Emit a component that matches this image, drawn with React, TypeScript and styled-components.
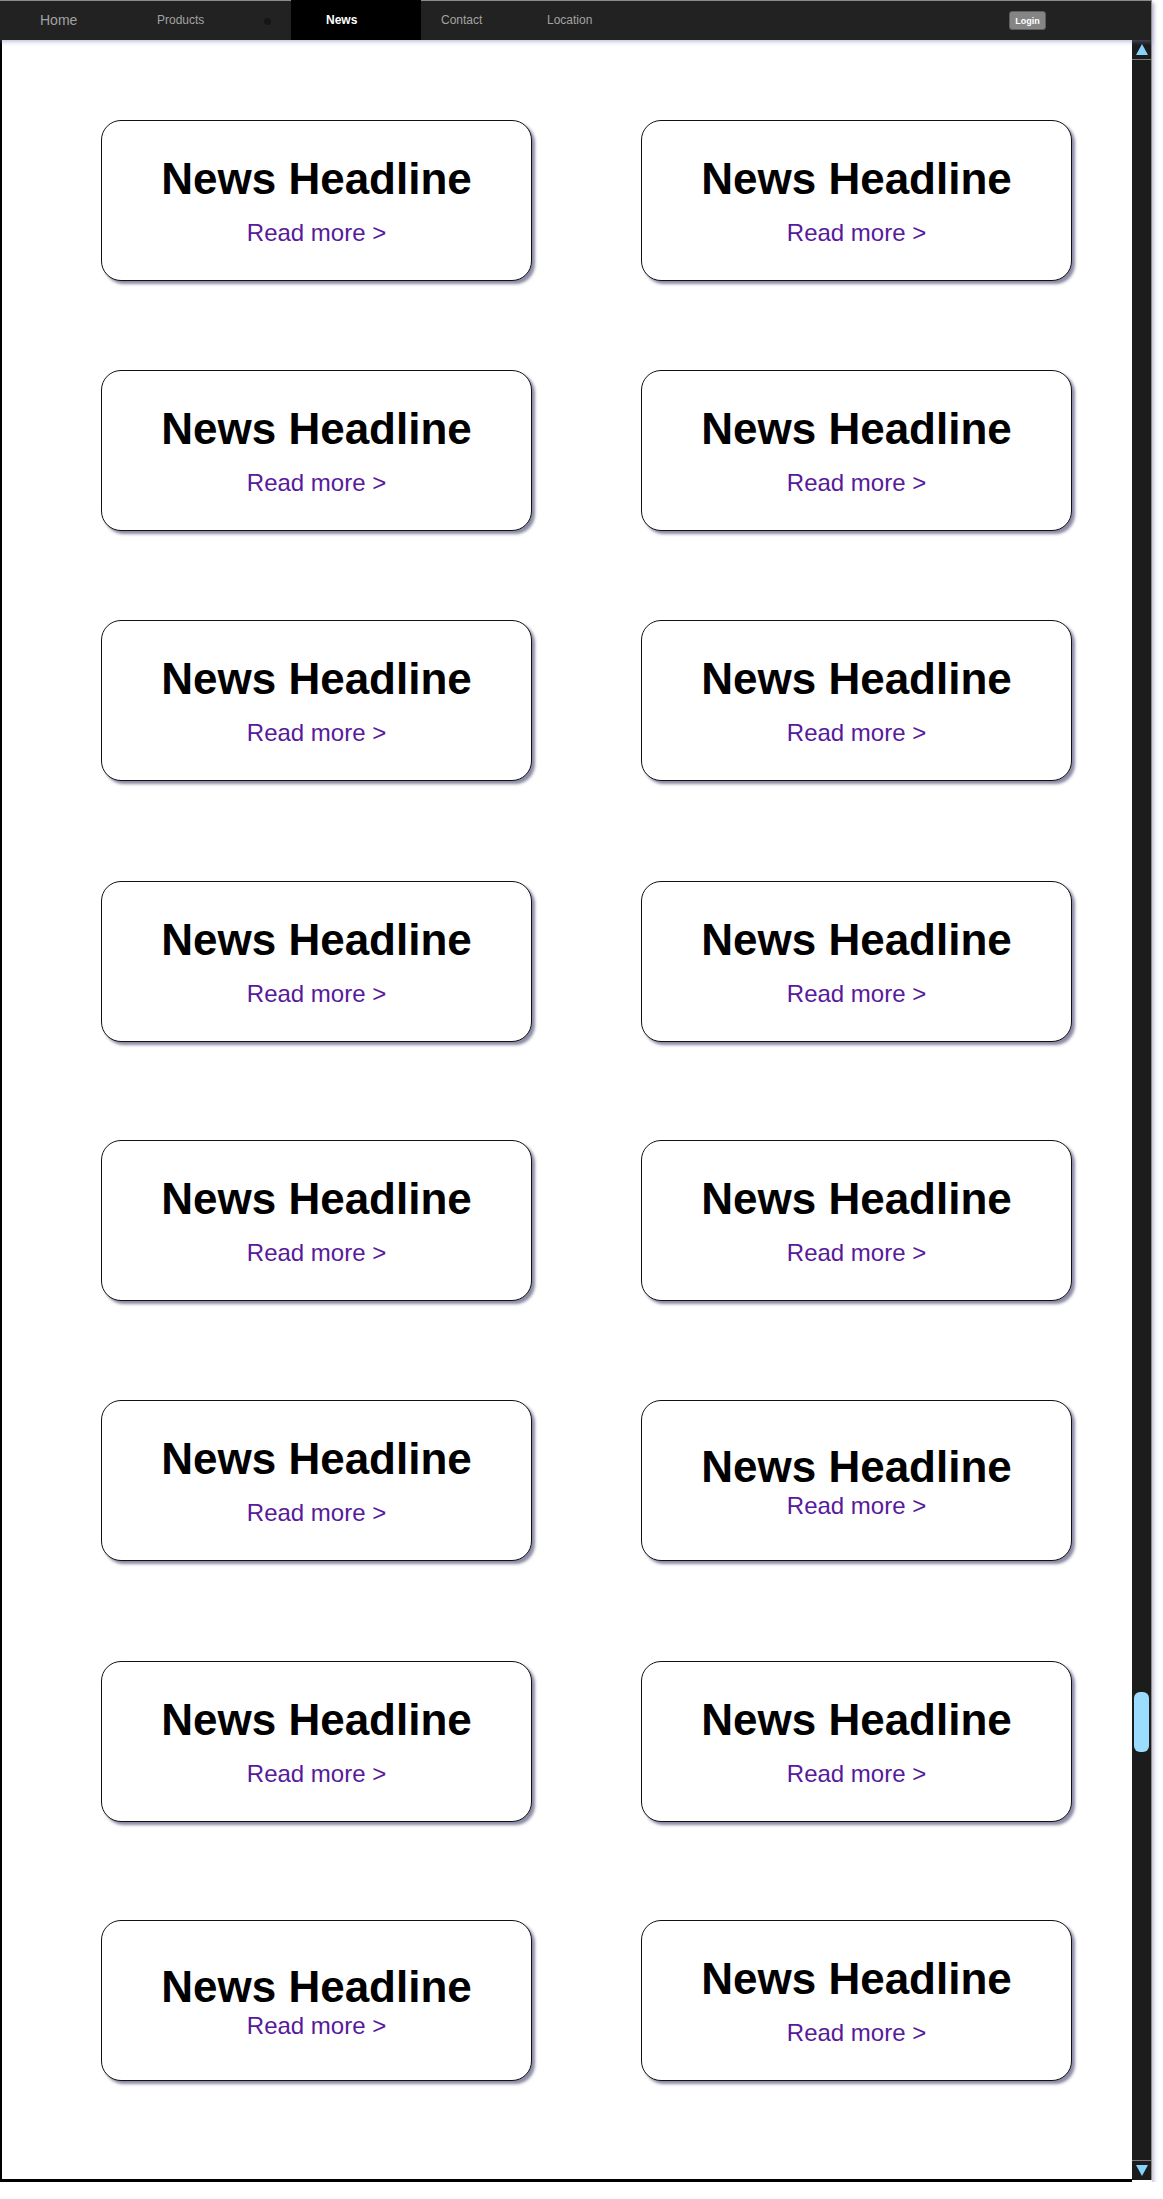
import * as React from 'react'
import styled, { createGlobalStyle } from 'styled-components'

const GlobalStyle = createGlobalStyle`
  html, body {
    margin: 0;
    padding: 0;
    background: #fff;
    font-family: "Liberation Sans", Arial, sans-serif;
  }
`

interface INavItem {
  label: string
  width: number
  pad: number
  active?: boolean
  big?: boolean
  dropdown?: boolean
}

const navItems: INavItem[] = [
  { label: 'Home', width: 122, pad: 40, big: true },
  { label: 'Products', width: 169, pad: 35, dropdown: true },
  { label: 'News', width: 130, pad: 35, active: true },
  { label: 'Contact', width: 106, pad: 20 },
  { label: 'Location', width: 120, pad: 20 }
]

// gap above each row, first one comes from the content padding
const rows = [
  { gap: 0, tight: [false, false] },
  { gap: 89, tight: [false, false] },
  { gap: 89, tight: [false, false] },
  { gap: 100, tight: [false, false] },
  { gap: 98, tight: [false, false] },
  { gap: 99, tight: [false, true] },
  { gap: 100, tight: [false, false] },
  { gap: 98, tight: [true, false] }
]

const Frame = styled.div`
  width: 1152px;
  box-shadow: 2px 3px 4px rgba(110, 118, 160, 0.45);
`

const Nav = styled.nav`
  position: relative;
  z-index: 1;
  display: flex;
  align-items: stretch;
  height: 40px;
  box-sizing: border-box;
  background: #222;
  border-top: 1px solid #8c8c8c;
  border-right: 1px solid #8c8c8c;
  box-shadow: 0 2px 4px rgba(120, 128, 180, 0.45);
`

const NavLink = styled.a<{ $width: number; $pad: number; $active?: boolean; $big?: boolean }>`
  display: flex;
  align-items: center;
  width: ${({ $width }) => $width}px;
  padding-left: ${({ $pad }) => $pad}px;
  box-sizing: border-box;
  margin-top: -1px;
  background: ${({ $active }) => ($active ? '#000' : 'transparent')};
  color: ${({ $active }) => ($active ? '#fff' : '#a2a2a2')};
  font-size: ${({ $big }) => ($big ? '14px' : '12px')};
  font-weight: ${({ $active }) => ($active ? 700 : 400)};
  text-decoration: none;
  cursor: pointer;
`

const DropDot = styled.span`
  width: 7px;
  height: 7px;
  margin-left: 60px;
  margin-top: 2px;
  border-radius: 50%;
  background: #161616;
`

const LoginButton = styled.button`
  margin: 10px 105px 0 auto;
  height: 19px;
  width: 37px;
  padding: 0;
  box-sizing: border-box;
  border: 1px solid #5e5e5e;
  border-radius: 3px;
  background: #858585;
  color: #fff;
  font-family: "Liberation Sans", Arial, sans-serif;
  font-size: 9px;
  font-weight: 700;
  cursor: pointer;
`

const Body = styled.div`
  display: flex;
  height: 2142px;
`

const Content = styled.main`
  flex: 1;
  box-sizing: border-box;
  padding: 80px 0 0 99px;
  border-left: 2px solid #000;
  border-bottom: 3px solid #000;
  background: #fff;
`

const Row = styled.div<{ $gap: number }>`
  display: flex;
  gap: 109px;
  margin-top: ${({ $gap }) => $gap}px;
`

const Card = styled.article`
  width: 431px;
  height: 161px;
  box-sizing: border-box;
  display: flex;
  flex-direction: column;
  align-items: center;
  justify-content: center;
  border: 1px solid #111;
  border-radius: 20px;
  background: #fff;
  box-shadow: 3px 3px 3px rgba(60, 60, 105, 0.6);
`

const Headline = styled.h2`
  margin: 0;
  font-size: 44px;
  font-weight: 700;
  line-height: normal;
  color: #000;
`

const ReadMore = styled.a<{ $tight?: boolean }>`
  margin-top: ${({ $tight }) => ($tight ? '0' : '15px')};
  font-size: 24px;
  line-height: normal;
  color: #571a9c;
  text-decoration: none;
  cursor: pointer;
`

const Scrollbar = styled.div`
  width: 20px;
  height: 2140px;
  box-sizing: border-box;
  display: flex;
  flex-direction: column;
  background: #1c1c1c;
  border-right: 1px solid #8c8c8c;
`

const ArrowButton = styled.div<{ $down?: boolean }>`
  height: 20px;
  flex: none;
  display: flex;
  align-items: center;
  justify-content: center;
  box-sizing: border-box;
  ${({ $down }) => ($down ? 'border-top' : 'border-bottom')}: 1px solid #7a7a7a;
`

const Track = styled.div`
  flex: 1;
`

const Thumb = styled.div`
  width: 15px;
  height: 60px;
  margin-left: 2px;
  border-radius: 6px;
  background: #9cdcff;
`

function Arrow({ down }: { down?: boolean }) {
  return (
    <svg width="14" height="13" viewBox="0 0 14 13">
      <polygon
        points={down ? '1,1 13,1 7,12' : '7,1 13,12 1,12'}
        fill="#86d2fb"
      />
    </svg>
  )
}

function NewsCard({ tight }: { tight?: boolean }) {
  return (
    <Card>
      <Headline>News Headline</Headline>
      <ReadMore $tight={tight}>Read more &gt;</ReadMore>
    </Card>
  )
}

export default function App() {
  // thumb top on the page, minus the nav and the up button
  const thumbTop = 1692 - 60
  return (
    <>
      <GlobalStyle />
      <Frame>
        <Nav>
          {navItems.map((item) => (
            <NavLink
              key={item.label}
              $width={item.width}
              $pad={item.pad}
              $active={item.active}
              $big={item.big}
            >
              {item.label}
              {item.dropdown && <DropDot />}
            </NavLink>
          ))}
          <LoginButton>Login</LoginButton>
        </Nav>
        <Body>
          <Content>
            {rows.map((row, i) => (
              <Row key={i} $gap={row.gap}>
                <NewsCard tight={row.tight[0]} />
                <NewsCard tight={row.tight[1]} />
              </Row>
            ))}
          </Content>
          <Scrollbar>
            <ArrowButton>
              <Arrow />
            </ArrowButton>
            <Track>
              <Thumb style={{ marginTop: thumbTop }} />
            </Track>
            <ArrowButton $down>
              <Arrow down />
            </ArrowButton>
          </Scrollbar>
        </Body>
      </Frame>
    </>
  )
}
